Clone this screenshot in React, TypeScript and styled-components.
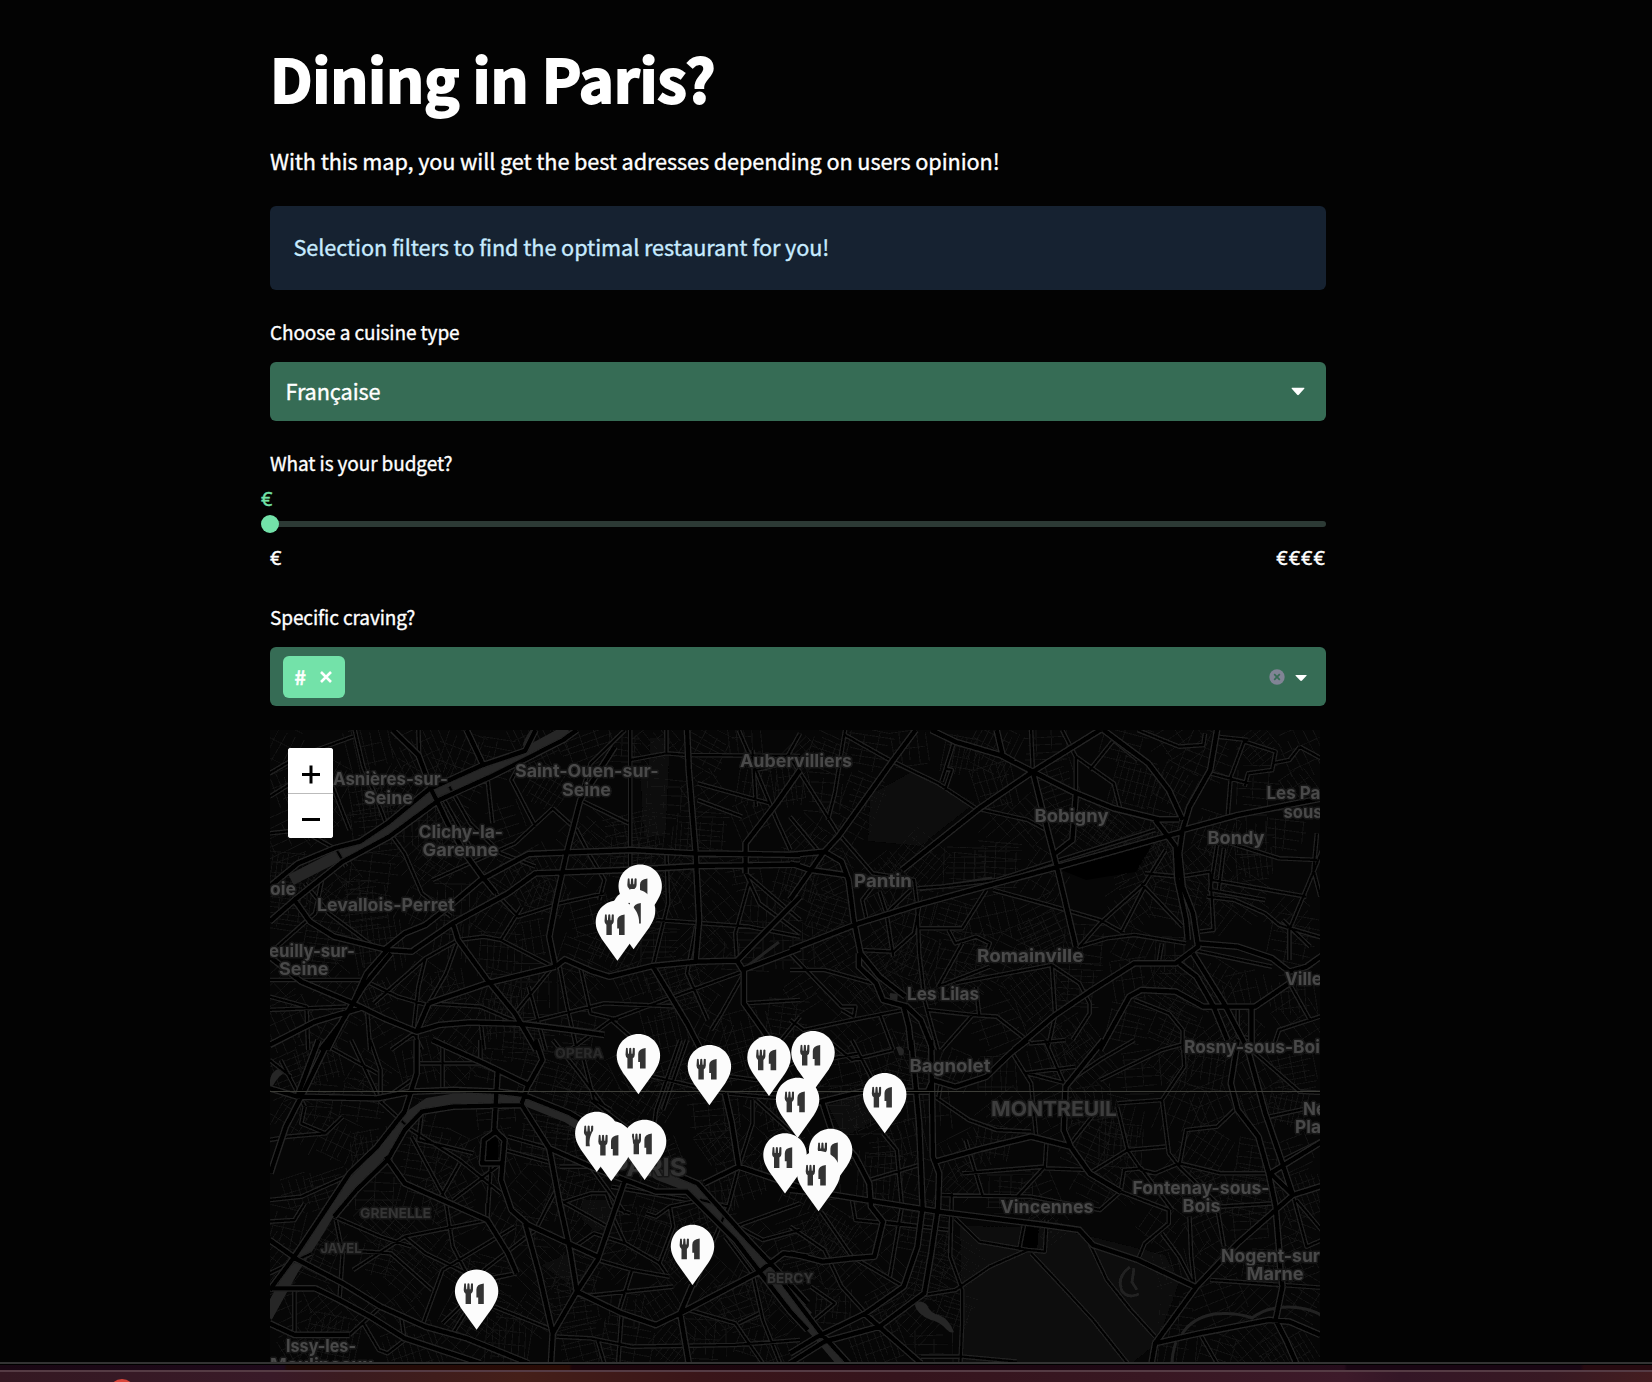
import React from "react";
import styled, { createGlobalStyle } from "styled-components";

const GlobalStyle = createGlobalStyle`
  *, *::before, *::after { box-sizing: border-box; }
  html, body { margin: 0; padding: 0; background: #030303; }
  body { overflow: hidden; }
`;

const Screen = styled.div`
  display: flex;
  flex-direction: column;
  width: 1652px;
  height: 1382px;
  overflow: hidden;
  background: #030303;
  color: #fff;
  font-family: "Noto Sans CJK JP", "Noto Sans", sans-serif;
  -webkit-text-stroke: 0.35px currentColor;
`;

const Column = styled.main`
  flex: 1;
  min-height: 0;
  display: flex;
  flex-direction: column;
  width: 1056px;
  margin-left: 270px;
  padding-top: 37px;
`;

const Title = styled.h1`
  margin: 0;
  height: 79px;
  line-height: 80px;
  font-size: 59.6px;
  font-weight: 700;
  letter-spacing: -0.25px;
  white-space: nowrap;
  -webkit-text-stroke: 1.9px currentColor;
`;

const Intro = styled.p`
  margin: 26px 0 27px;
  height: 37px;
  line-height: 37px;
  font-size: 21.7px;
  letter-spacing: -0.115px;
  white-space: nowrap;
`;

const Alert = styled.div`
  height: 84px;
  padding: 0 24px 3px 23.5px;
  display: flex;
  align-items: center;
  border-radius: 6px;
  background: #162231;
  color: #c7ebff;
  font-size: 21.7px;
  letter-spacing: -0.09px;
  white-space: nowrap;
`;

const Label = styled.label<{ $top?: number }>`
  margin-top: ${(p) => p.$top ?? 25}px;
  height: 32px;
  line-height: 33px;
  font-size: 19px;
  letter-spacing: -0.1px;
`;

const SelectBox = styled.div<{ $left: number; $right: number }>`
  margin-top: 15px;
  height: 59px;
  flex: none;
  display: flex;
  align-items: center;
  padding: 0 ${(p) => p.$right}px 0 ${(p) => p.$left}px;
  border-radius: 6px;
  background: #366c55;
`;

const SelectText = styled.span`
  flex: 1;
  line-height: 56px;
  padding-bottom: 2px;
  font-size: 21.7px;
  letter-spacing: -0.1px;
`;

const Tag = styled.span`
  display: flex;
  align-items: center;
  gap: 14px;
  width: 62px;
  height: 42px;
  padding-left: 11.5px;
  border-radius: 6px;
  background: #73e2a9;
  font-size: 20px;
  font-weight: 500;
  line-height: 40px;
  -webkit-text-stroke: 0.6px currentColor;
`;

const Spacer = styled.span`
  flex: 1;
`;

const SliderValue = styled.div`
  margin: 5px 0 8px -9px;
  height: 30px;
  font: 20px/31px "Noto Sans", sans-serif;
  color: #73e2a9;
`;

const Track = styled.div`
  height: 6px;
  flex: none;
  display: flex;
  align-items: center;
  border-radius: 3px;
  background: #2c3a35;
`;

const Thumb = styled.span`
  width: 18px;
  height: 18px;
  flex: none;
  margin-left: -9px;
  border-radius: 50%;
  background: #73e2a9;
`;

const Ticks = styled.div`
  display: flex;
  justify-content: space-between;
  margin-top: 15px;
  height: 30px;
  font: 20px/31px "Noto Sans", sans-serif;
  letter-spacing: 1px;
`;

const MapFrame = styled.section`
  position: relative;
  flex: 1;
  min-height: 0;
  width: 1050px;
  margin-top: 24px;
  overflow: hidden;
  background: #080808;
`;

const MapDrawing = styled.svg`
  display: block;
  width: 1050px;
  height: 634px;
`;

const ZoomControl = styled.div`
  position: absolute;
  left: 18px;
  top: 18px;
  width: 45px;
  height: 90px;
  display: flex;
  flex-direction: column;
  border-radius: 3px;
  overflow: hidden;
  background: #fff;
`;

const ZoomButton = styled.button`
  flex: 1;
  display: flex;
  align-items: center;
  justify-content: center;
  padding: 8px 0 0 1px;
  border: 0;
  background: #fff;
  & + & {
    border-top: 1px solid #bbb;
  }
`;

const Divider = styled.div`
  height: 3px;
  flex: none;
  background: linear-gradient(#333 0 2px, #000 2px 3px);
`;

const Desktop = styled.div`
  height: 5px;
  flex: none;
  background: linear-gradient(
    90deg,
    #190713 0,
    #1f0a1b 284px,
    #200a08 287px,
    #2b0c06 569px,
    #1b050b 572px,
    #1d0712 1050px,
    #260d1c 1344px,
    #190613 1347px,
    #190613 1580px,
    #270a10 1584px
  );
`;

const Dock = styled.footer`
  height: 12px;
  flex: none;
  position: relative;
  overflow: hidden;
  border-top: 2px solid #553b44;
  background: linear-gradient(
    90deg,
    #341822 0,
    #391a28 270px,
    #3b1b1f 350px,
    #451f19 520px,
    #3a1519 700px,
    #35141d 900px,
    #381722 1150px,
    #3d1a2a 1344px,
    #341626 1400px,
    #381923 1550px,
    #441d20 1652px
  );
`;

const DockBadge = styled.span`
  position: absolute;
  left: 109px;
  top: 7px;
  width: 26px;
  height: 26px;
  border-radius: 50%;
  background: #d8453a;
`;

/* ---- map data: each sheet is digitised in its own local units ---- */

type Sheet = {
  place: string;
  water: string;
  major: string;
  minor: string;
};

const SHEETS: Sheet[] = [
  {
    place: "translate(260 720) scale(.3444 .3333)",
    water:
      "M895 30L780 95L650 155L510 215L450 265L380 320L310 362L240 400L90 480",
    major: `M600 30L650 140 M385 30L460 105L500 215L515 245L545 310L595 400L645 470L685 520
      M28 500L110 430L215 385L290 365L370 310L490 208L640 138L770 92L800 30
      M28 605L100 540L240 425L375 350L520 240L680 165L880 60L920 30
      M100 540L145 605L215 650L370 690L440 695L560 610L720 520L800 460L880 457L1060 450L1270 438L1568 434
      M360 690L420 640L480 615L560 550L640 480L780 402L880 398L1080 390L1260 400L1568 405
      M560 610L575 660L660 780L740 880L802 990
      M1030 80L930 240L890 400L860 540L840 650L858 740
      M1240 30L1245 150L1265 400L1275 600L1265 720
      M1568 150L1500 250L1410 370L1410 460
      M858 740L885 718L960 752L1015 770L1140 738L1270 725L1385 722L1405 755L1405 850L1460 930L1500 990
      M1385 722L1568 530 M1400 750L1568 685
      M858 740L660 790L490 850 M490 850L455 935L520 915L610 907L760 912L900 930L1000 945
      M370 690L310 760L270 850L235 910L175 990 M380 700L300 800L240 900L195 990
      M28 710L120 785L270 850L360 895L455 935 M28 975L160 905L290 865
      M1140 738L1240 910L1280 990`,
    minor: `M275 30L300 140L340 240L370 320 M460 30L462 105 M660 170L675 310
      M1075 30L1075 450 M1060 30L960 130L925 250 M850 265L920 330L960 410L1000 480L985 540
      M930 240L1070 310 M550 200L610 310L700 400L800 440 M850 265L740 370L500 480
      M28 160L110 110L270 50 M28 230L200 120 M1390 30L1440 150L1500 300L1540 390
      M1568 40L1520 130L1440 150 M1075 120L1180 100L1240 105L1568 108 M1180 390L1185 550L1140 740
      M685 520L750 590L870 550L1000 520 M385 350L420 400L470 520L555 590
      M1410 460L1450 550L1568 640 M1150 600L1420 620L1568 650 M480 715L460 800L445 935L470 990
      M575 660L480 715L330 850 M700 660L760 560 M575 660L650 650L700 660L850 740
      M300 780L400 830L500 860 M740 880L850 740 M870 740L890 850L920 990 M930 740L960 880L1040 900
      M1400 755L1200 830L1020 900L900 990 M1400 770L1340 880L1310 930 M130 490L200 580L330 680
      M28 870L250 860 M140 990L135 860L28 830 M28 340L120 330L215 385 M185 130L260 330 M220 385L250 440
      M1430 90L1440 260 M1180 30L1180 100 M1270 240L1400 290 M1270 190L1480 250
      M490 850L640 860L760 912 M575 660L540 760L490 850 M640 900L650 990 M310 860L320 990
      M455 935L455 990 M455 935L380 990 M760 912L1000 850L1220 860 M1020 900L1120 990 M780 800L830 990
      M1410 460L1568 600 M1420 490L1380 640L1385 722 M1270 600L1240 760L1300 900 M660 180L530 230L620 400
      M1405 850L1568 840 M1490 990L1568 890 M28 780L300 780 M180 480L160 580L28 700 M760 120L730 180L800 320`,
  },
  {
    place: "translate(790 720) scale(.3444 .3333)",
    water: "",
    major: `M410 30L480 65L610 105L705 155L820 215L940 265L1070 298L1130 298 M600 30L617 105L650 125
      M900 30L705 155L550 265L325 450 M910 30L1040 130L1100 210L1140 300
      M1240 30L1220 150L1160 260L1140 330L1130 400L1140 500L1170 580L1185 680L1120 730L1000 730L870 815L770 885L650 990
      M1060 300L1120 380L1125 480L1150 600L1155 660 M1140 330L1300 285L1568 230
      M0 690L200 610L370 555L600 490L780 440L1140 335 M365 30L300 120L140 350L95 400L0 540
      M0 405L100 395L150 425L170 480L185 600L205 700L260 770L335 830 M0 430L60 450L160 465
      M200 700L200 740L250 790L270 840L340 860L380 900L415 990 M330 860L345 920L352 990
      M1185 670L1300 680L1400 715L1450 755L1500 740L1568 690 M1130 730L1180 770L1230 860L1270 960
      M1170 700L1260 850L1320 970 M705 155L745 320L775 440L830 680 M830 220L820 360L770 400
      M900 990L985 830L1020 810L1120 815L1200 860L1350 860L1450 790 M1340 860L1340 990`,
    minor: `M0 110L140 340L240 460L360 480L370 560L375 700L390 830 M0 290L80 390 M160 30L130 220L110 300
      M160 45L280 115L430 190L540 265L690 300L745 330 M475 70L440 185 M450 145L470 150L450 210
      M700 30L705 155 M790 30L830 110L830 220 M830 110L940 190L960 270 M940 60L870 150 M940 60L1010 120
      M1010 30L1130 80L1200 75L1205 40 M1320 60L1280 170L1270 300 M1320 65L1410 95L1400 150L1330 160L1320 200
      M1240 50L1330 60 M1480 80L1568 130 M1400 130L1450 120L1480 80 M1220 160L1330 190
      M590 510L750 555L900 600L970 640 M1090 390L1030 490L900 610L840 680L920 655L1000 645L1150 670
      M1030 460L1130 470L1220 455 M1020 490L1140 620 M1240 375L1220 510L1380 540 M1260 385L1245 510
      M1225 480L1500 530 M1210 530L1290 540L1380 580L1420 615L1568 660 M1568 330L1530 430L1450 630L1450 720
      M375 625L500 625L570 510 M460 630L480 670L540 650L580 670L560 720 M500 670L430 800 M430 800L580 740
      M480 790L760 735L840 790L870 850L870 880L820 960 M760 735L770 885L750 980 M400 870L530 885L600 890L700 970L800 960
      M280 580L300 710 M205 690L300 695L360 640L375 560 M0 700L150 860L190 860L185 890L150 870 M530 885L440 990
      M1000 840L1100 880L1140 930L1140 990 M1400 990L1420 930L1568 880 M0 750L100 750L240 790 M0 900L40 930L180 900L330 870
      M1220 455L1230 630L1190 635 M1530 340L1520 450L1540 530 M1430 600L1510 680 M260 515L280 580L350 510
      M240 500L210 540L225 610 M1300 860L1300 950L1340 955 M1080 670L1070 730 M1450 790L1510 900 M390 840L430 990
      M1280 370L1420 415L1530 420 M1030 500L960 640 M1170 690L1400 740 M260 880L300 990 M540 800L550 890
      M370 505L440 500L600 480L1060 330`,
  },
  {
    place: "translate(260 1040) scale(.3444 .3333)",
    water:
      "M20 830L95 690L150 605L200 520L260 440L370 320L440 225L490 190L560 178L750 172L890 230L1020 310L1160 405L1250 440L1370 570L1460 680L1590 830",
    major: `M200 0L120 170L75 260L30 400 M170 0L110 165 M28 145L110 170L340 175L440 155L560 150L690 155L765 165
      M215 530L280 450L370 360L420 270L470 215L560 200L760 195L840 325L960 380L1060 420L1150 455L1240 455L1380 600L1450 695L1540 815L1590 870
      M28 750L100 650L190 510L260 400L340 320L420 215L455 100L455 0
      M500 0L650 70L780 135L820 60L800 0 M780 130L760 190 M765 165L900 220L1030 300 M1200 400L1270 430L1400 580L1500 690L1590 790
      M690 95L680 270L710 300L700 420L730 510L780 555L980 650 M365 350L420 430L540 485L660 540L720 640L745 700
      M770 550L810 700L850 880L845 970 M840 325L870 490L900 630L920 755
      M1060 420L1020 540L980 660L920 755L850 880 M28 600L110 660L240 730L350 800L480 860L600 895L780 970
      M28 745L160 745L230 780L320 830L420 895L640 970 M920 755L1050 820L1150 855L1220 820L1450 695L1520 640L1590 650
      M28 850L100 885L260 885 M1220 820L1245 970 M1255 735L1220 820 M1350 160L1370 250L1390 380L1290 430 M1390 380L1590 450
      M690 270L650 300L645 370L700 370`,
    minor: `M28 300L80 290L190 280L240 230 M130 200L120 250L190 280 M350 185L440 270L580 360L700 460 M640 0L640 70
      M940 60L970 180L1020 210 M1568 60L1440 120L1300 100 M1220 0L1150 210L1140 290 M1240 0L1170 210 M1430 180L1430 250L1390 380L1360 500L1330 570L1260 740
      M580 370L520 480 M440 290L540 480 M28 480L120 470L250 410 M28 545L100 540L130 490 M215 530L350 590L440 620
      M220 540L240 640L230 790 M660 490L660 540L420 590L270 690 M870 430L800 570L650 690L620 780L560 880 M870 490L960 460L1005 460L1020 500L1075 520
      M1020 520L1060 610L1160 670L1180 700 M745 700L640 720L480 640L420 590 M680 800L850 870 M1120 520L1150 530L1190 500L1200 560L1160 670
      M980 660L1080 690L1190 710 M1380 560L1568 490 M860 890L960 895L1080 920L1380 915L1568 900 M1050 820L1040 970
      M930 770L1200 740 M1245 810L1380 850L1460 970 M410 830L420 900L370 940L345 930L300 850 M530 850L660 720L745 700
      M265 0L350 185L440 120 M320 0L350 90L350 185 M530 0L530 150 M455 70L640 70L690 95 M840 325L720 290 M710 330L850 370
      M670 380L660 540 M560 480L700 370 M100 890L100 750 M260 885L350 800 M28 700L150 640 M540 490L560 620L620 740
      M870 380L960 380L1060 520 M870 480L1010 560 M900 630L970 580L1060 610 M1190 500L1280 480L1360 500 M1370 550L1460 600L1568 570
      M1080 0L1060 100L1130 120 M1100 100L1350 160L1568 180 M960 180L1100 290 M1440 180L1568 300 M850 0L920 90L1000 200
      M1020 440L1240 480 M1350 590L1430 700L1460 840L1510 970 M1080 690L1040 820 M1390 850L1450 820 M740 560L530 690L470 860
      M240 630L380 640L500 750 M980 900L1000 970 M60 60L130 200 M28 60L90 110 M200 20L340 100 M470 215L460 300L620 340`,
  },
  {
    place: "translate(790 1040) scale(.3444 .3333)",
    water: "M-10 780L80 880L170 990",
    major: `M352 0L375 250L385 500L370 620L330 740L220 820L80 890L0 940 M410 0L415 350L433 400L430 500L410 640L390 760L260 860L100 905L0 970
      M0 210L90 185L210 155L400 155L415 120L480 140L570 110L640 40L690 0
      M910 0L800 140L795 270L815 320L870 400L960 455 M420 365L560 325L700 290L815 320
      M1300 0L1280 130L1300 210L1360 290L1390 400L1410 500L1422 650 M1330 30L1380 220L1420 340L1460 465
      M1568 430L1460 465L1300 610L1180 740L1060 910L1050 970 M0 450L100 460L430 515L740 555L840 570L880 615L1010 660L1175 740
      M95 190L120 270L190 350L230 430L235 500L270 545L245 650L180 655L95 665L0 640 M1060 910L1190 880L1390 840L1450 845L1540 885
      M1430 740L1410 840L1440 900L1470 970 M1395 400L1460 465 M1395 400L1568 290 M-20 730L90 880L170 970 M215 820L380 970
      M1420 650L1430 740`,
    minor: `M640 30L700 130L715 290 M270 280L310 330L325 500L290 710 M230 420L375 375 M90 515L180 650L330 740 M420 170L520 240L600 270L700 275
      M690 100L800 130 M680 100L830 80 M740 0L800 140 M950 200L980 330L1020 390L1060 400L1130 370L1250 400L1390 400 M950 190L1080 180L1100 340L1130 380
      M1080 180L1145 80L1140 0 M1568 160L1480 155L1340 30 M870 400L980 330L1090 320 M1130 380L1150 270L1240 260L1290 210
      M745 300L740 380L660 470 M740 385L870 390 M960 455L970 390L1020 385L1110 510 M430 465L700 470L900 510L960 455
      M960 455L1100 510L1100 550L1030 610L1010 660 M470 460L465 650L500 750L500 850L495 970 M480 535L550 605L690 630L740 635L745 540
      M680 550L665 630 M390 765L480 750L580 680L690 630 M700 640L800 750L880 840L980 970 M870 610L920 720L990 810L1060 890
      M1080 580L1130 650L1175 740 M1160 530L1165 650L1175 740 M1240 500L1260 620 M1220 720L1568 745 M1190 880L1240 970
      M1460 465L1500 620L1568 590 M1470 480L1568 600 M900 200L815 310 M900 120L1080 30L1150 10 M180 0L250 140 M110 0L180 60L300 30
      M180 480L190 540L375 560 M270 545L460 570 M0 560L100 630L150 740L220 820 M380 950L500 950L660 965 M0 350L190 350
      M1250 500L1410 490 M1130 380L1250 500 M1390 230L1568 190 M1430 360L1568 290 M60 740L130 790L60 850 M100 60L200 40 M430 180L440 120
      M500 400L740 380 M510 300L560 470 M1000 0L900 60L800 130`,
  },
];

const LAKES = [
  "M914 1303q8 -4 13 2q3 8 12 10q10 4 15 17q-3 2 -8 -3q-6 -7 -15 -9q-14 -5 -17 -17z",
  "M267 1092l4 -16q4 -8 12 -8q3 4 -3 8q-6 6 -10 16z",
  "M890 993l8 1l-1 7l-7 -1z",
  "M896 1047q6 -2 8 4q0 6 -5 4z",
];

const WATER_LINES = [
  "M1130 1267q-14 10 -8 24q6 8 17 3",
  "M1134 1268l-2 14l5 8",
  "M1182 1334q10 -16 32 -20q22 -2 38 4q18 -14 48 -10q14 2 22 8",
  "M1172 1364q0 -10 4 -22",
  "M745 968q18 -14 34 -26",
  "M524 746q2 -8 10 -18",
  "M920 890l22 -4l50 -8",
];

const PARKS = [
  "M960 1226l85 1l40 8l80 20l14 28l-22 60l-30 24h-164z",
  "M870 795l45 -25l60 33l-55 43l-52 -5z",
  "M640 770h24v66h-20z",
  "M650 738h20l-4 90h-20z",
  "M582 1200h32v26l-18 6l-14 -12z",
  "M541 1265l28 -12l10 22l-12 8z",
  "M828 1105l40 -14l10 28l-34 18z",
];

const GAPS = [
  "M486 1137l12 -1v26h-14z",
  "M1025 1226l14 2l-2 20h-14z",
  "M1056 868l100 -30l-20 34l-50 8z",
];

/* Side streets: small hatched blocks, each with its own bearing. */
function sideStreets(): string[] {
  let seed = 71;
  const rnd = () => {
    seed = (seed * 16807) % 2147483647;
    return seed / 2147483647;
  };
  const out: string[] = [];
  for (let gy = 738; gy < 1370; gy += 40) {
    for (let gx = 276; gx < 1325; gx += 42) {
      const cx = gx + rnd() * 22;
      const cy = gy + rnd() * 22;
      const a = rnd() * Math.PI;
      const half = 17 + rnd() * 10;
      const step = 5 + rnd() * 5;
      const quiet =
        (cx > 960 && cx < 1170 && cy > 1226) || (cx > 870 && cx < 975 && cy > 775 && cy < 845);
      if (quiet || rnd() < 0.08) continue;
      const c = Math.cos(a);
      const s = Math.sin(a);
      let d = "";
      for (let t = -half; t < half; t += step) {
        const l = half * (0.6 + rnd() * 0.5);
        const k = (rnd() - 0.5) * 5;
        d += `M${(cx - l * c - t * s).toFixed(1)} ${(cy - l * s + t * c).toFixed(1)}L${(cx + l * c - (t + k) * s).toFixed(1)} ${(cy + l * s + (t + k) * c).toFixed(1)}`;
      }
      for (let t = -half; t < half; t += step * 2) {
        const l = half * (0.5 + rnd() * 0.5);
        d += `M${(cx + l * s + t * c).toFixed(1)} ${(cy - l * c + t * s).toFixed(1)}L${(cx - l * s + t * c).toFixed(1)} ${(cy + l * c + t * s).toFixed(1)}`;
      }
      out.push(d);
    }
  }
  return out;
}

const STREETS = sideStreets();

type Place = [text: string, x: number, y: number, width: number, size?: number, color?: string];

const PLACES: Place[] = [
  ["Asnières-sur-", 333, 785, 115],
  ["Seine", 364, 803.5, 49],
  ["Saint-Ouen-sur-", 515, 777, 143.5],
  ["Seine", 562, 796, 49],
  ["Clichy-la-", 418.5, 837.5, 84.5],
  ["Garenne", 422.5, 856, 76],
  ["Levallois-Perret", 317, 910.5, 137.5],
  ["oie", 270, 895, 26],
  ["euilly-sur-", 269, 956.5, 86],
  ["Seine", 279, 975, 49.5],
  ["Aubervilliers", 740, 767, 112],
  ["Bobigny", 1034.5, 822, 74],
  ["Bondy", 1207.5, 844, 57],
  ["Les Pa", 1266.5, 799, 54],
  ["sous", 1283.5, 818, 39],
  ["Pantin", 854, 887, 58],
  ["Romainville", 977, 961.5, 106.5],
  ["Les Lilas", 907, 999.5, 72],
  ["Ville", 1285, 985, 37],
  ["Rosny-sous-Boi", 1184, 1052.5, 136],
  ["Bagnolet", 909.5, 1071.5, 81],
  ["MONTREUIL", 991, 1115.7, 126, 20.5, "#3e3e3e"],
  ["Ne", 1303, 1114.5, 23],
  ["Pla", 1295, 1133, 26],
  ["Fontenay-sous-", 1132.5, 1193.5, 137],
  ["Bois", 1182.5, 1212, 38],
  ["Vincennes", 1000.5, 1213, 93],
  ["Nogent-sur", 1221, 1261.5, 99],
  ["Marne", 1246.5, 1280, 57],
  ["OPERA", 555, 1058, 48, 13, "#2c2c2c"],
  ["GRENELLE", 360, 1218, 71, 13.5, "#343434"],
  ["JAVEL", 320.5, 1253, 41, 13.5, "#343434"],
  ["BERCY", 767, 1283, 46.5, 13.5, "#343434"],
  ["PARIS", 612, 1175.5, 74.5, 24, "#333"],
  ["Issy-les-", 286, 1352, 70],
  ["Moulineaux", 270, 1371, 103],
];

/* Pins are listed north to south so that the southern ones lie on top. */
const PINS: [number, number][] = [
  [640.2, 864.5],
  [633.6, 889],
  [617.4, 900.5],
  [813, 1031],
  [638.4, 1034],
  [769, 1035.7],
  [709.4, 1045],
  [884.7, 1073],
  [797.6, 1077.7],
  [596.8, 1111.7],
  [644.6, 1119.7],
  [611.2, 1121],
  [830.6, 1128.7],
  [785, 1133.3],
  [818.6, 1151],
  [692.5, 1224.7],
  [476.6, 1269.5],
];

const PlaceLabel = styled.text`
  font-family: Inter, "Noto Sans", sans-serif;
  font-weight: 700;
  -webkit-text-stroke: 0;
  paint-order: stroke;
  stroke: #191919;
  stroke-width: 3px;
  stroke-linejoin: round;
`;

function Roads({ kind, width, color }: { kind: "major" | "minor" | "water"; width: number; color: string }) {
  return (
    <g fill="none" stroke={color} strokeWidth={width} strokeLinejoin="round">
      {SHEETS.map((s) => (
        <g key={s.place} transform={s.place}>
          <path d={s[kind]} vectorEffect="non-scaling-stroke" />
        </g>
      ))}
    </g>
  );
}

function Pin({ x, y }: { x: number; y: number }) {
  return (
    <g transform={`translate(${x - 21.7} ${y})`}>
      <path
        d="M21.7 0C9.7 0 0 9.6 0 21.6C0 28 2.6 33 6 38.4L21.7 60.3L37.4 38.4C40.8 33 43.4 28 43.4 21.6C43.4 9.6 33.7 0 21.7 0Z"
        fill="#fcfcfc"
      />
      <path
        d="M9.3 14.2q.9 -1 1.7 0l.4 5.6h.8l.4 -5.6q1 -1 1.9 0l.4 5.6h.8l.4 -5.6q1 -1 2 0v6.4q0 2.6 -2 3.6v10.4h-5.4v-10.4q-1.9 -1 -1.9 -3.6z"
        fill="#333"
      />
      <path d="M28.9 13.9v20.7h-5.6v-6.6h-1.8v-8q0 -5.4 7.4 -6.1z" fill="#333" />
    </g>
  );
}

function CityMap() {
  return (
    <MapDrawing viewBox="270 730 1050 634">
      <defs>
        <filter id="soften" x="-5%" y="-5%" width="110%" height="110%">
          <feGaussianBlur stdDeviation="0.6" />
        </filter>
        <pattern id="dots" width="4" height="4" patternUnits="userSpaceOnUse">
          <rect width="4" height="4" fill="#090909" />
          <rect width="1" height="1" fill="#101010" />
          <rect x="2" y="2" width="1" height="1" fill="#101010" />
        </pattern>
      </defs>
      <rect x="270" y="730" width="1050" height="634" fill="#060606" />
      <g filter="url(#soften)">
        {PARKS.map((d) => (
          <path key={d} d={d} fill="url(#dots)" />
        ))}
        {STREETS.map((d) => (
          <path key={d} d={d} fill="none" stroke="#141414" strokeWidth={1} />
        ))}
        {GAPS.map((d) => (
          <path key={d} d={d} fill="#040404" />
        ))}
        <Roads kind="water" width={11.5} color="#262626" />
        {LAKES.map((d) => (
          <path key={d} d={d} fill="#252525" />
        ))}
        {WATER_LINES.map((d) => (
          <path key={d} d={d} fill="none" stroke="#222" strokeWidth={3} />
        ))}
        <Roads kind="minor" width={4.6} color="#232323" />
        <Roads kind="minor" width={2.3} color="#050505" />
        <Roads kind="major" width={6.8} color="#252525" />
        <Roads kind="major" width={4.2} color="#000" />
      </g>
      <g filter="url(#soften)">
        {PLACES.map(([text, x, y, width, size = 17.3, color = "#484848"]) => (
          <PlaceLabel
            key={`${text}${x}`}
            x={x}
            y={y}
            fontSize={size}
            textLength={width}
            lengthAdjust="spacingAndGlyphs"
            fill={color}
          >
            {text}
          </PlaceLabel>
        ))}
      </g>
      <rect x="270" y="1091" width="1050" height="1" fill="#3d3e38" />
      {PINS.map(([x, y]) => (
        <Pin key={`${x}-${y}`} x={x} y={y} />
      ))}
    </MapDrawing>
  );
}

export default function App() {
  return (
    <>
      <GlobalStyle />
      <Screen>
        <Column>
          <Title>Dining in Paris?</Title>
          <Intro>With this map, you will get the best adresses depending on users opinion!</Intro>
          <Alert>Selection filters to find the optimal restaurant for you!</Alert>

          <Label>Choose a cuisine type</Label>
          <SelectBox $left={15.5} $right={21}>
            <SelectText>Française</SelectText>
            <svg width="14" height="9" viewBox="0 0 14 9">
              <path d="M1 .8h12q.8 .2 .2 1L7.8 7.8q-.8 .7 -1.6 0L.8 1.8Q.2 1 1 .8z" fill="#fff" />
            </svg>
          </SelectBox>

          <Label>What is your budget?</Label>
          <SliderValue>€</SliderValue>
          <Track>
            <Thumb />
          </Track>
          <Ticks>
            <span>€</span>
            <span>€€€€</span>
          </Ticks>

          <Label $top={28}>Specific craving?</Label>
          <SelectBox $left={13} $right={19}>
            <Tag>
              <span>#</span>
              <svg width="12" height="12" viewBox="0 0 12 12">
                <path d="M1 1L11 11M11 1L1 11" stroke="#fff" strokeWidth="2.6" />
              </svg>
            </Tag>
            <Spacer />
            <svg width="16" height="16" viewBox="0 0 16 16">
              <circle cx="8" cy="8" r="7.7" fill="#808495" />
              <path d="M5.2 5.2L10.8 10.8M10.8 5.2L5.2 10.8" stroke="#366c55" strokeWidth="1.7" />
            </svg>
            <svg width="22" height="10" viewBox="0 0 22 10">
              <path d="M11 3h10.3q.7 .2 .2 .8L17 8.6q-.9 .7 -1.8 0L10.6 3.8q-.4 -.6 .4 -.8z" fill="#fff" />
            </svg>
          </SelectBox>

          <MapFrame>
            <CityMap />
            <ZoomControl>
              <ZoomButton aria-label="Zoom in">
                <svg width="18" height="19" viewBox="0 0 18 19">
                  <path d="M0 9.5H18M9 .5V18.5" stroke="#000" strokeWidth="3" />
                </svg>
              </ZoomButton>
              <ZoomButton aria-label="Zoom out">
                <svg width="18" height="19" viewBox="0 0 18 19">
                  <path d="M0 9.5H18" stroke="#000" strokeWidth="3" />
                </svg>
              </ZoomButton>
            </ZoomControl>
          </MapFrame>
        </Column>
        <Divider />
        <Desktop />
        <Dock>
          <DockBadge />
        </Dock>
      </Screen>
    </>
  );
}
